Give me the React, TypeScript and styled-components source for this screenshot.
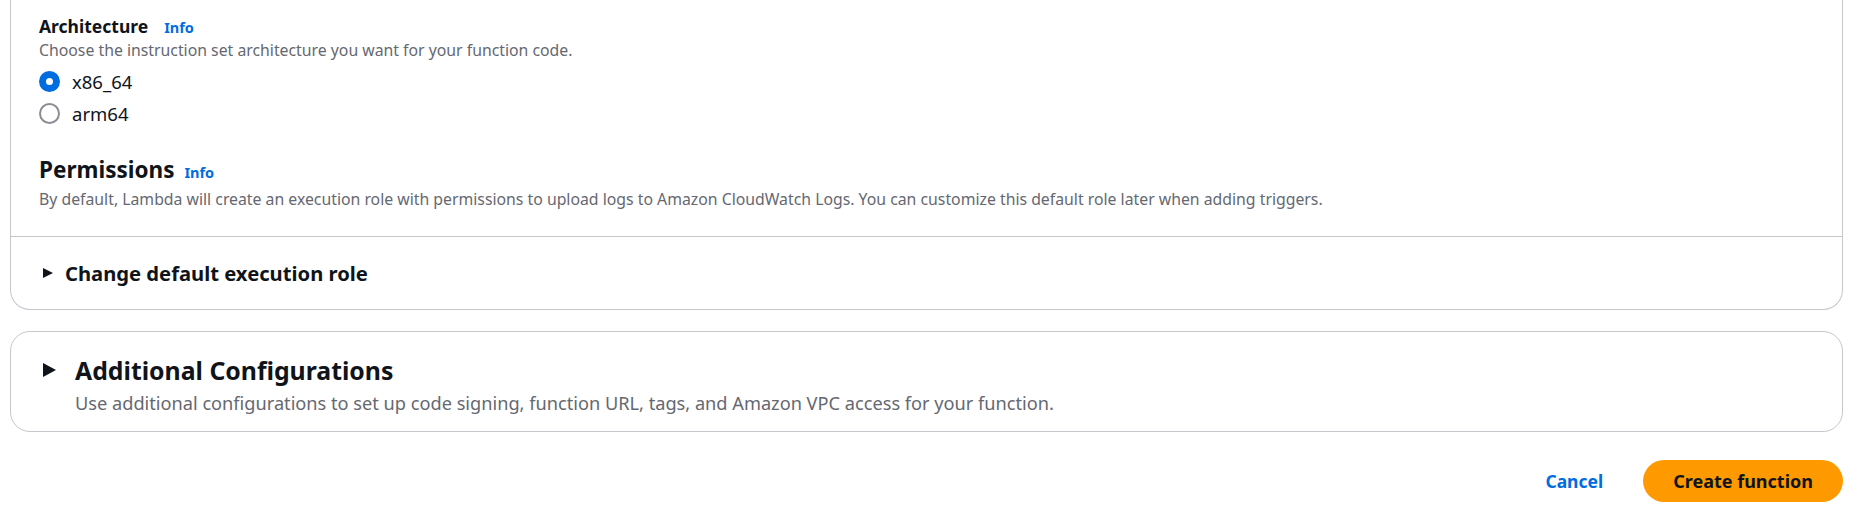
import React from "react";
import styled, { createGlobalStyle } from "styled-components";

const GlobalStyle = createGlobalStyle`
    html, body {
        margin: 0;
        padding: 0;
        background: #ffffff;
    }

    body {
        font-family: "Noto Sans", "Open Sans", Arial, sans-serif;
        color: #0f141a;
        -webkit-font-smoothing: antialiased;
    }
`

const Page = styled.div`
    padding: 0 14px 0 10px;
    display: flex;
    flex-direction: column;
`

const Card = styled.section<{ $cut?: boolean }>`
    border: 1px solid #c6c6cd;
    border-top: ${props => props.$cut ? 'none' : '1px solid #c6c6cd'};
    border-radius: ${props => props.$cut ? '0 0 20px 20px' : '20px'};
    background: #ffffff;
    display: flex;
    flex-direction: column;
`

const CardBody = styled.div`
    padding: 15px 28px 27px;
    display: flex;
    flex-direction: column;
`

const Field = styled.div`
    display: flex;
    flex-direction: column;
`

const LabelRow = styled.div<{ $big?: boolean }>`
    display: flex;
    align-items: baseline;
    gap: ${props => props.$big ? '10px' : '16px'};
    height: ${props => props.$big ? '28px' : '22px'};
    line-height: ${props => props.$big ? '28px' : '22px'};
`

const Label = styled.span<{ $big?: boolean }>`
    font-weight: 700;
    font-size: ${props => props.$big ? '22.5px' : '17.5px'};
    color: #0f141a;
`

const InfoLink = styled.a`
    font-weight: 700;
    font-size: 14.5px;
    color: #006ce0;
    text-decoration: none;
    cursor: pointer;
`

const Description = styled.p<{ $gap?: number }>`
    margin: ${props => props.$gap ?? 3}px 0 0;
    font-size: 15.8px;
    line-height: 20px;
    color: #656871;
`

const RadioGroup = styled.div`
    margin-top: 5px;
    display: flex;
    flex-direction: column;
`

const RadioRow = styled.label`
    height: 32px;
    display: flex;
    align-items: center;
    gap: 12px;
    cursor: pointer;
`

const RadioDot = styled.span<{ $checked?: boolean }>`
    box-sizing: border-box;
    width: 21px;
    height: 21px;
    border-radius: 50%;
    background: #ffffff;
    border: ${props => props.$checked ? '7px solid #006ce0' : '2px solid #8c8c94'};
    flex-shrink: 0;
`

const RadioText = styled.span`
    font-size: 18.5px;
    color: #0f141a;
`

const PermissionsField = styled(Field)`
    margin-top: 27px;
`

const ExpandRow = styled.div`
    border-top: 1px solid #c6c6cd;
    height: 72px;
    padding-left: 32px;
    display: flex;
    align-items: center;
    gap: 12px;
    cursor: pointer;
`

const ExpandTitle = styled.span`
    font-weight: 700;
    font-size: 20.2px;
    color: #0f141a;
`

const SecondCard = styled(Card)`
    margin-top: 21px;
    padding: 24px 28px 16px 32px;
    display: grid;
    grid-template-columns: 13px 1fr;
    column-gap: 19px;
    align-items: center;
`

const BigTitle = styled.h2`
    margin: 0;
    font-weight: 700;
    font-size: 24.8px;
    line-height: 28px;
    color: #0f141a;
`

const BigDescription = styled.p`
    grid-column: 2;
    margin: 7px 0 0;
    font-size: 18.2px;
    line-height: 24px;
    color: #656871;
`

const Actions = styled.div`
    margin-top: 28px;
    display: flex;
    justify-content: flex-end;
    align-items: center;
    gap: 20px;
`

const LinkButton = styled.button`
    border: none;
    background: transparent;
    padding: 0 20px;
    height: 42px;
    font-family: inherit;
    font-weight: 700;
    font-size: 17.5px;
    color: #006ce0;
    cursor: pointer;
`

const PrimaryButton = styled.button`
    border: none;
    border-radius: 21px;
    background: #ff9900;
    padding: 0 30px;
    height: 42px;
    font-family: inherit;
    font-weight: 700;
    font-size: 18px;
    color: #0f141a;
    cursor: pointer;
`

const Caret = function({ w, h }: { w: number, h: number }) {
    return (
        <svg width={w} height={h} viewBox={`0 0 ${w} ${h}`} aria-hidden="true">
            <polygon points={`0,0 ${w},${h / 2} 0,${h}`} fill="#0f141a" />
        </svg>
    )
}

const App = function() {
    const [arch, setArch] = React.useState("x86_64");

    return (
        <>
            <GlobalStyle />
            <Page>
                <Card $cut>
                    <CardBody>
                        <Field>
                            <LabelRow>
                                <Label>Architecture</Label>
                                <InfoLink>Info</InfoLink>
                            </LabelRow>
                            <Description>Choose the instruction set architecture you want for your function code.</Description>
                            <RadioGroup>
                                {["x86_64", "arm64"].map(a => (
                                    <RadioRow key={a} onClick={() => setArch(a)}>
                                        <RadioDot $checked={arch === a} />
                                        <RadioText>{a}</RadioText>
                                    </RadioRow>
                                ))}
                            </RadioGroup>
                        </Field>
                        <PermissionsField>
                            <LabelRow $big>
                                <Label $big>Permissions</Label>
                                <InfoLink>Info</InfoLink>
                            </LabelRow>
                            <Description $gap={5}>By default, Lambda will create an execution role with permissions to upload logs to Amazon CloudWatch Logs. You can customize this default role later when adding triggers.</Description>
                        </PermissionsField>
                    </CardBody>
                    <ExpandRow>
                        <Caret w={10} h={10} />
                        <ExpandTitle>Change default execution role</ExpandTitle>
                    </ExpandRow>
                </Card>

                <SecondCard>
                    <Caret w={13} h={14} />
                    <BigTitle>Additional Configurations</BigTitle>
                    <BigDescription>Use additional configurations to set up code signing, function URL, tags, and Amazon VPC access for your function.</BigDescription>
                </SecondCard>

                <Actions>
                    <LinkButton>Cancel</LinkButton>
                    <PrimaryButton>Create function</PrimaryButton>
                </Actions>
            </Page>
        </>
    )
}

export default App;
